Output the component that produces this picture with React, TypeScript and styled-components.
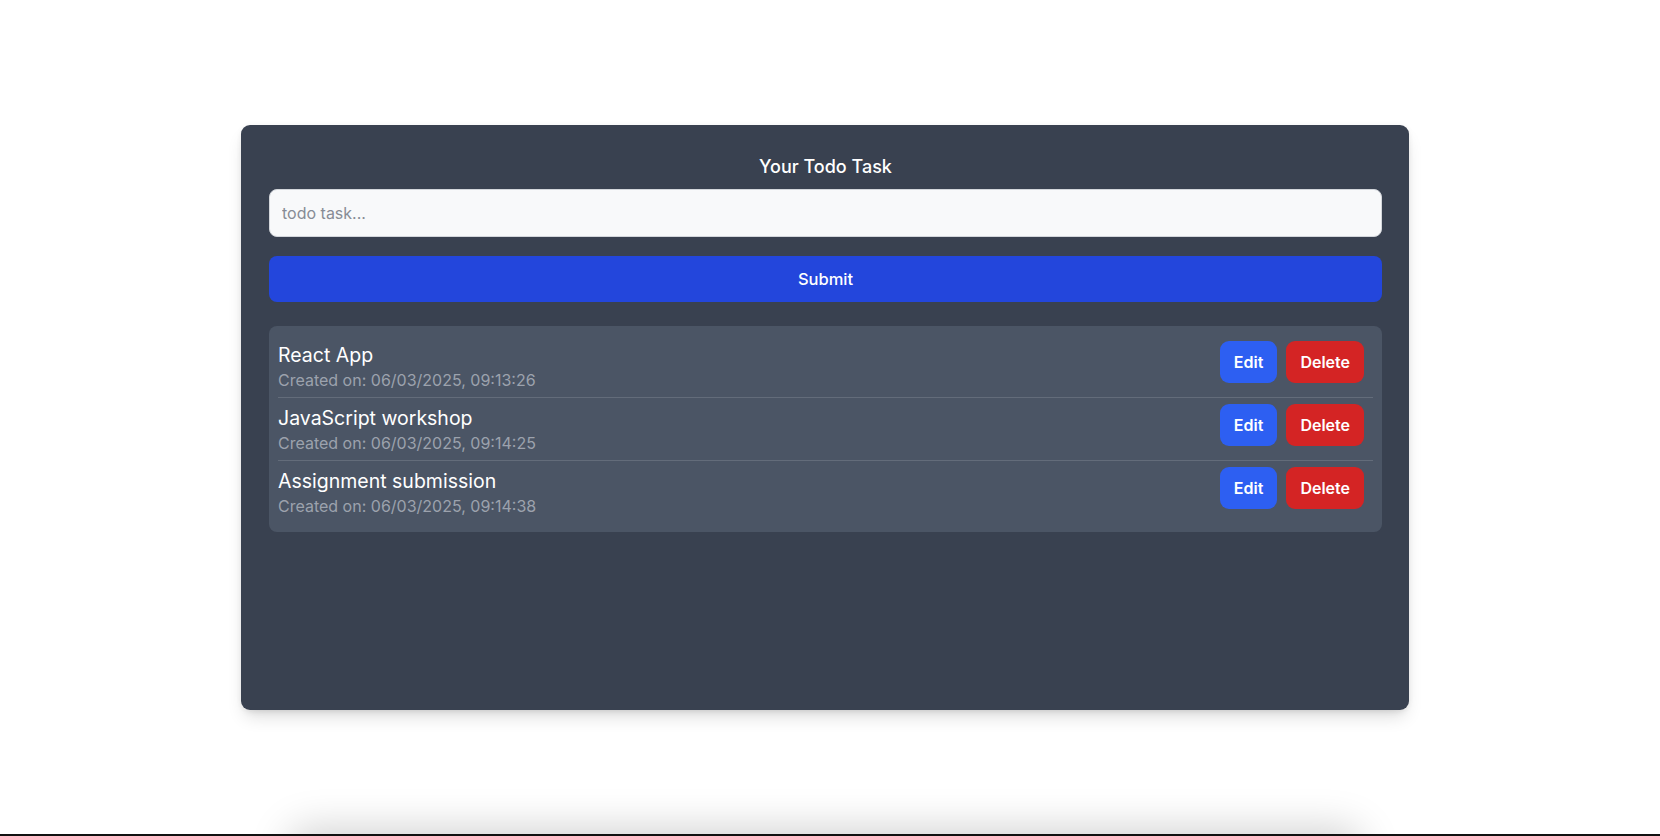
import { useState } from 'react'
import styled, { createGlobalStyle } from 'styled-components'

const GlobalStyle = createGlobalStyle`
  * {
    box-sizing: border-box;
  }
  html, body {
    margin: 0;
    padding: 0;
    background: #ffffff;
    font-family: Inter, "Noto Sans", "DejaVu Sans", sans-serif;
  }
`

const Page = styled.div`
  height: 836px;
  overflow: hidden;
  padding: 125px 10px 0 0;
  display: flex;
  flex-direction: column;
  align-items: center;
  border-bottom: 2px solid #111111;
`

const Card = styled.div`
  width: 1168px;
  min-height: 585px;
  flex-shrink: 0;
  background-color: #394150;
  border-radius: 9px;
  padding: 29px 27px 28px 28px;
  box-shadow: 0 10px 18px -4px rgba(0, 0, 0, 0.14), 0 4px 8px -4px rgba(0, 0, 0, 0.12),
    0 0 6px rgba(0, 0, 0, 0.04);
`

const Title = styled.h2`
  margin: 0 0 10px;
  text-align: center;
  font-size: 18px;
  line-height: 25px;
  font-weight: 500;
  color: #ffffff;
`

const Form = styled.form`
  display: flex;
  flex-direction: column;
  gap: 19px;
  margin-bottom: 24px;
`

const Input = styled.input`
  height: 48px;
  width: 100%;
  padding: 0 12px;
  border: 1px solid #d3d6db;
  border-radius: 8px;
  background-color: #f8f9fa;
  font-family: inherit;
  font-size: 16px;
  color: #1f2937;
  outline: none;

  &::placeholder {
    color: #878c95;
  }
`

const SubmitButton = styled.button`
  height: 46px;
  width: 100%;
  border: none;
  border-radius: 8px;
  background-color: #2346dc;
  color: #ffffff;
  font-family: inherit;
  font-size: 16.5px;
  font-weight: 500;
  cursor: pointer;
`

const List = styled.ul`
  list-style: none;
  margin: 0;
  padding: 9px 9px;
  background-color: #4b5565;
  border-radius: 8px;
`

const Row = styled.li`
  display: flex;
  justify-content: space-between;
  align-items: flex-start;
  padding: 6px 9px 6px 0;
  border-bottom: 1px solid #636c7a;

  &:last-child {
    border-bottom: none;
  }
`

const TaskInfo = styled.div`
  display: flex;
  flex-direction: column;
`

const TaskName = styled.span`
  font-size: 19.5px;
  line-height: 28px;
  color: #ffffff;
`

const TaskDate = styled.span`
  font-size: 16px;
  line-height: 22px;
  color: #9ca2ad;
`

const Actions = styled.div`
  display: flex;
  gap: 9px;
`

const ActionButton = styled.button<{ $variant: 'edit' | 'delete' }>`
  height: 42px;
  padding: 0 14px;
  border: none;
  border-radius: 9px;
  background-color: ${(p) => (p.$variant === 'edit' ? '#2d5ff2' : '#d42424')};
  color: #ffffff;
  font-family: inherit;
  font-size: 16px;
  font-weight: 600;
  cursor: pointer;
`

const Ghost = styled.div`
  width: 1060px;
  height: 60px;
  flex-shrink: 0;
  margin-top: 130px;
  border-radius: 12px;
  background: #ffffff;
  box-shadow: 0 -6px 40px 6px rgba(0, 0, 0, 0.18);
`

interface Todo {
  id: number
  text: string
  createdAt: string
}

const initialTodos: Todo[] = [
  { id: 1, text: 'React App', createdAt: '06/03/2025, 09:13:26' },
  { id: 2, text: 'JavaScript workshop', createdAt: '06/03/2025, 09:14:25' },
  { id: 3, text: 'Assignment submission', createdAt: '06/03/2025, 09:14:38' },
]

function App() {
  const [todos, setTodos] = useState<Todo[]>(initialTodos)
  const [task, setTask] = useState('')

  const handleSubmit = (e: React.FormEvent) => {
    e.preventDefault()
    if (!task.trim()) return
    setTodos([
      ...todos,
      { id: Date.now(), text: task, createdAt: new Date().toLocaleString('en-GB') },
    ])
    setTask('')
  }

  return (
    <>
      <GlobalStyle />
      <Page>
        <Card>
          <Title>Your Todo Task</Title>
          <Form onSubmit={handleSubmit}>
            <Input
              placeholder="todo task..."
              value={task}
              onChange={(e) => setTask(e.target.value)}
            />
            <SubmitButton type="submit">Submit</SubmitButton>
          </Form>
          <List>
            {todos.map((todo) => (
              <Row key={todo.id}>
                <TaskInfo>
                  <TaskName>{todo.text}</TaskName>
                  <TaskDate>Created on: {todo.createdAt}</TaskDate>
                </TaskInfo>
                <Actions>
                  <ActionButton $variant="edit">Edit</ActionButton>
                  <ActionButton
                    $variant="delete"
                    onClick={() => setTodos(todos.filter((t) => t.id !== todo.id))}
                  >
                    Delete
                  </ActionButton>
                </Actions>
              </Row>
            ))}
          </List>
        </Card>
        <Ghost />
      </Page>
    </>
  )
}

export default App
